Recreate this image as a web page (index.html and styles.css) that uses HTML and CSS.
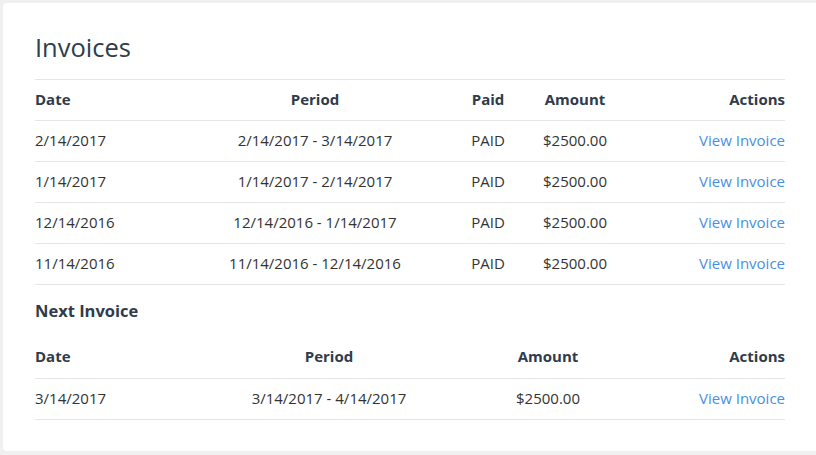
FILE: index.html
```html
<!DOCTYPE html>
<html>
<head>
<meta charset="utf-8">
<link rel="stylesheet" href="styles.css">
</head>
<body>
<div class="card">
  <h1 class="title">Invoices</h1>
  <table class="tbl">
    <colgroup>
      <col class="c-date"><col class="c-period"><col class="c-paid"><col class="c-amount"><col class="c-actions">
    </colgroup>
    <thead>
      <tr><th class="l">Date</th><th>Period</th><th>Paid</th><th>Amount</th><th class="r">Actions</th></tr>
    </thead>
    <tbody>
      <tr><td class="l">2/14/2017</td><td>2/14/2017 - 3/14/2017</td><td>PAID</td><td>$2500.00</td><td class="r"><a href="#">View Invoice</a></td></tr>
      <tr><td class="l">1/14/2017</td><td>1/14/2017 - 2/14/2017</td><td>PAID</td><td>$2500.00</td><td class="r"><a href="#">View Invoice</a></td></tr>
      <tr><td class="l">12/14/2016</td><td>12/14/2016 - 1/14/2017</td><td>PAID</td><td>$2500.00</td><td class="r"><a href="#">View Invoice</a></td></tr>
      <tr><td class="l">11/14/2016</td><td>11/14/2016 - 12/14/2016</td><td>PAID</td><td>$2500.00</td><td class="r"><a href="#">View Invoice</a></td></tr>
    </tbody>
  </table>
  <h2 class="sub">Next Invoice</h2>
  <table class="tbl next">
    <colgroup>
      <col class="n-date"><col class="n-period"><col class="n-amount"><col class="n-actions">
    </colgroup>
    <thead>
      <tr><th class="l">Date</th><th>Period</th><th>Amount</th><th class="r">Actions</th></tr>
    </thead>
    <tbody>
      <tr><td class="l">3/14/2017</td><td>3/14/2017 - 4/14/2017</td><td>$2500.00</td><td class="r"><a href="#">View Invoice</a></td></tr>
    </tbody>
  </table>
</div>
</body>
</html>
```
FILE: styles.css
```css
html, body {
  margin: 0;
  padding: 0;
  background: #f0f0f0;
  overflow: hidden;
  width: 816px;
  height: 455px;
}
body {
  font-family: "Open Sans", "Noto Sans", sans-serif;
  color: #333;
}
.card {
  margin: 3px 0 0 3px;
  width: 830px;
  height: 448px;
  box-sizing: border-box;
  background: #fff;
  border-radius: 4px;
  padding: 28px 0 0 32px;
}
.title {
  margin: 0;
  width: 750px;
  font-size: 25.5px;
  font-weight: 400;
  line-height: 32px;
  height: 48px;
  color: #2f3d4c;
  border-bottom: 1px solid #e6e6e6;
}
.tbl {
  width: 750px;
  border-collapse: collapse;
  table-layout: fixed;
  font-size: 15px;
}
.tbl th, .tbl td {
  padding: 0 0 3px 0;
  height: 37px;
  border-bottom: 1px solid #e6e6e6;
  text-align: center;
  white-space: nowrap;
}
.tbl th {
  font-weight: 700;
  color: #2f3b4b;
}
.tbl td { color: #333; }
.tbl .l { text-align: left; }
.tbl .r { text-align: right; }
.tbl a {
  color: #4a90e2;
  text-decoration: none;
}
.c-date { width: 135px; }
.c-period { width: 290px; }
.c-paid { width: 56px; }
.c-amount { width: 118px; }
.c-actions { width: 151px; }
.n-date { width: 165px; }
.n-period { width: 258px; }
.n-amount { width: 180px; }
.n-actions { width: 147px; }
.sub {
  margin: 0;
  font-size: 16.5px;
  font-weight: 700;
  color: #2f3b4b;
  height: 52px;
  line-height: 52px;
}
.next th {
  padding-bottom: 3px;
  height: 38px;
}
```
